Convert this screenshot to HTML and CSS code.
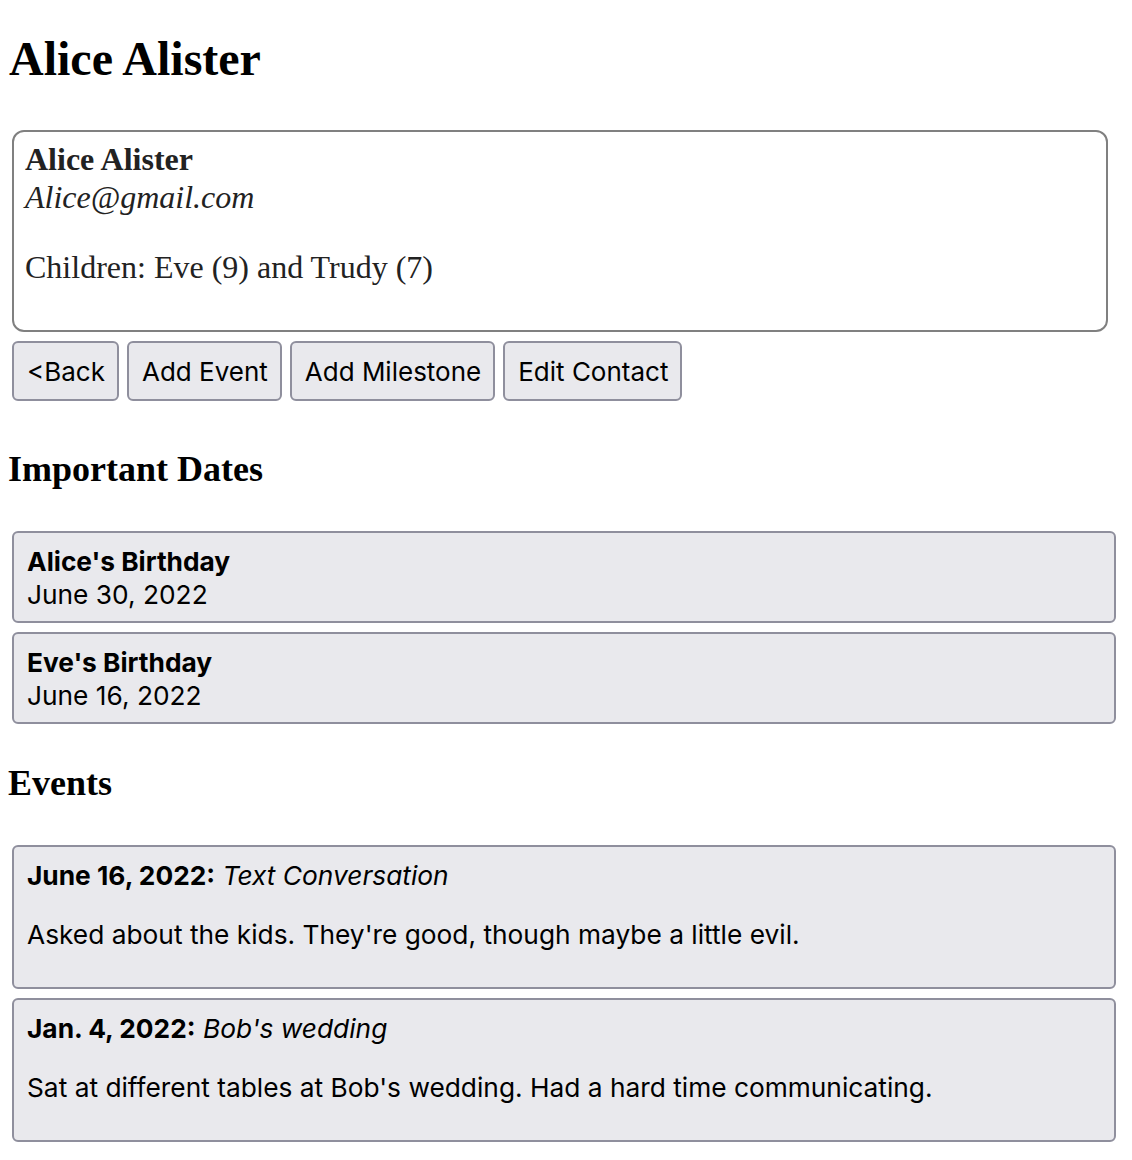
FILE: index.html
```html
<!DOCTYPE html>
<html lang="en">
<head>
<meta charset="utf-8">
<title>Alice Alister</title>
<link rel="stylesheet" href="styles.css">
</head>
<body>
<div class="page">
  <h1 class="title">Alice Alister</h1>

  <div class="contact-card">
    <div class="contact-name">Alice Alister</div>
    <div class="contact-email">Alice@gmail.com</div>
    <p class="contact-note">Children: Eve (9) and Trudy (7)</p>
  </div>

  <div class="actions">
    <button class="btn" type="button">&lt;Back</button>
    <button class="btn" type="button">Add Event</button>
    <button class="btn" type="button">Add Milestone</button>
    <button class="btn" type="button">Edit Contact</button>
  </div>

  <h2 class="section-title">Important Dates</h2>
  <div class="list">
    <div class="item">
      <div class="item-title">Alice's Birthday</div>
      <div class="item-sub">June 30, 2022</div>
    </div>
    <div class="item">
      <div class="item-title">Eve's Birthday</div>
      <div class="item-sub">June 16, 2022</div>
    </div>
  </div>

  <h2 class="section-title">Events</h2>
  <div class="list">
    <div class="item">
      <div class="item-head"><strong>June 16, 2022:</strong> <em>Text Conversation</em></div>
      <p class="item-body">Asked about the kids. They're good, though maybe a little evil.</p>
    </div>
    <div class="item">
      <div class="item-head"><strong>Jan. 4, 2022:</strong> <em>Bob's wedding</em></div>
      <p class="item-body">Sat at different tables at Bob's wedding. Had a hard time communicating.</p>
    </div>
  </div>
</div>
</body>
</html>
```

FILE: styles.css
```css
html, body {
  margin: 0;
  padding: 0;
  background: #ffffff;
}

.page {
  padding: 0 8px 20px;
  font-family: "Liberation Serif", "Times New Roman", serif;
  color: #000;
}

.title {
  font-size: 48px;
  font-weight: bold;
  margin: 31px 0 0 1px;
  line-height: 55px;
}

.contact-card {
  margin: 44px 16px 0 4px;
  border: 2px solid #808080;
  border-radius: 12px;
  background: #fff;
  padding: 8px 11px 0;
  color: #222;
  font-size: 32px;
  line-height: 38px;
}

.contact-name {
  font-weight: bold;
}

.contact-email {
  font-style: italic;
}

.contact-note {
  margin: 32px 0 44px;
}

.actions {
  display: flex;
  gap: 8px;
  margin: 9px 0 0 4px;
}

.btn {
  font-family: Inter, "Noto Sans", sans-serif;
  font-size: 26px;
  color: #000;
  background: #e9e9ed;
  border: 2px solid #8f8f9d;
  border-radius: 6px;
  height: 60px;
  padding: 0 12px 0 13px;
  margin: 0;
}

.section-title {
  font-size: 36px;
  font-weight: bold;
  margin: 50px 0 0;
  line-height: 41px;
}

.actions + .section-title {
  margin-top: 48px;
}

.list + .section-title {
  margin-top: 39px;
}

.list {
  display: flex;
  flex-direction: column;
  gap: 9px;
  margin: 41px 8px 0 4px;
}

.item {
  background: #e9e9ed;
  border: 2px solid #8f8f9d;
  border-radius: 6px;
  padding: 12px 13px 10px;
  font-family: Inter, "Noto Sans", sans-serif;
  font-size: 26.3px;
  line-height: 33px;
  color: #000;
}

.item-title {
  font-weight: bold;
}

.item-head strong {
  font-weight: bold;
}

.item-head em {
  font-style: italic;
}

.item-body {
  margin: 26px 0 26px;
}
```
